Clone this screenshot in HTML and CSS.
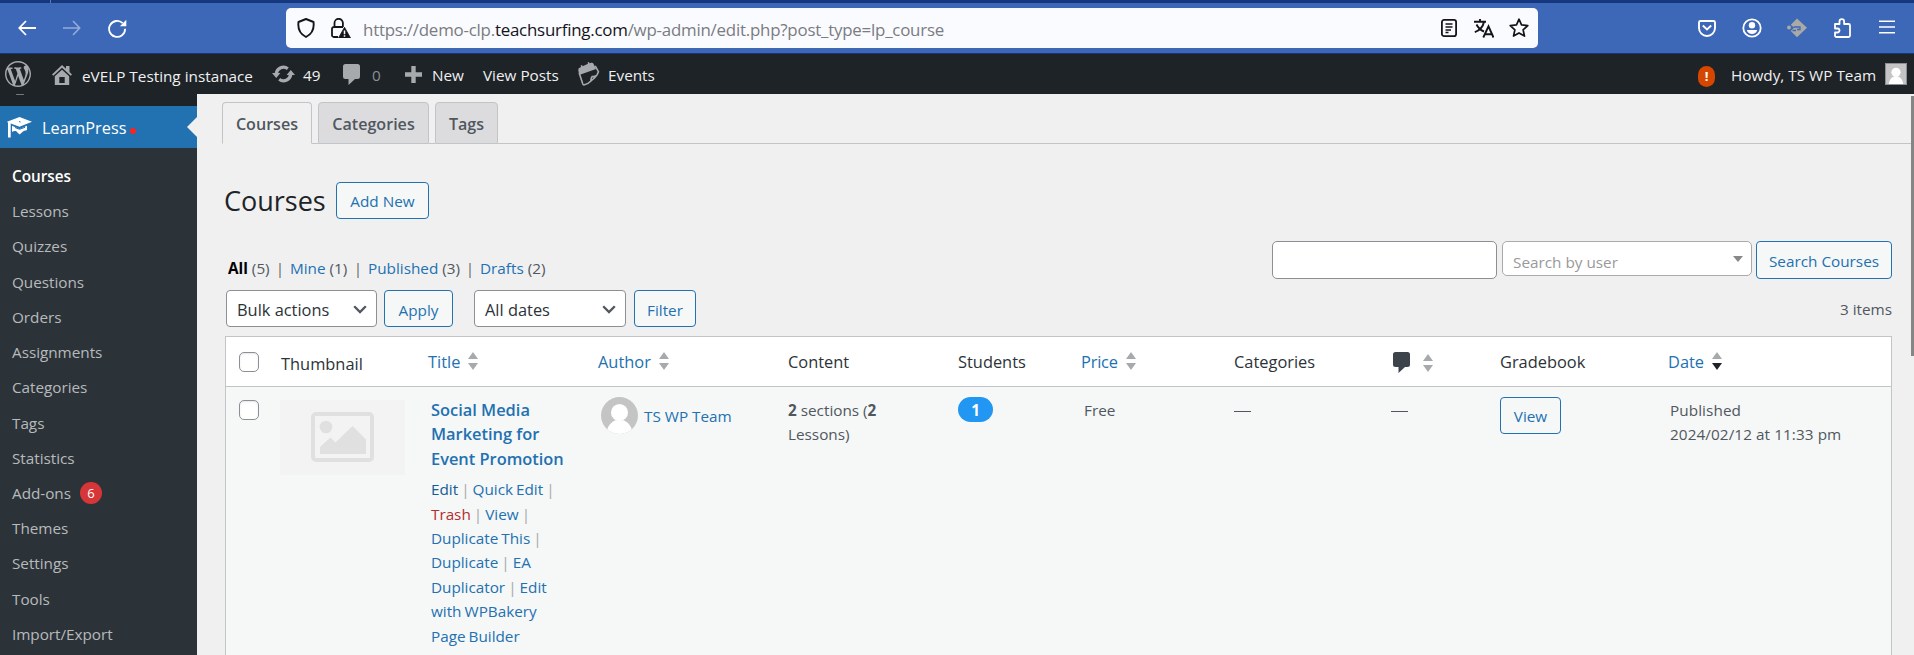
FILE: index.html
```html
<!DOCTYPE html>
<html lang="en">
<head>
<meta charset="utf-8">
<title>Courses</title>
<link rel="stylesheet" href="styles.css">
</head>
<body>
<svg class="defs" width="0" height="0">
  <symbol id="comment" viewBox="0 0 17 21"><path d="M2.500 0h12A2.500 2.500 0 0 1 17 2.500v10a2.500 2.500 0 0 1-2.500 2.500H12l-6.500 6V15h-3A2.500 2.500 0 0 1 0 12.500v-10A2.500 2.500 0 0 1 2.500 0z"/></symbol>
  <symbol id="chev" viewBox="0 0 14 9"><path d="M1.200 1.200 7 7l5.800-5.800" fill="none" stroke="#50575e" stroke-width="2.300"/></symbol>
  <symbol id="person" viewBox="0 0 36 36"><path fill="#c4c4c4" d="M0 0h36v36H0z"/><circle cx="18" cy="15" r="8.300" fill="#fff"/><path fill="#fff" d="M5 36c1-8 5-12 9-13.500h8c4 1.500 8 5.500 9 13.500z"/></symbol>
</svg>

<div class="strip"><i></i></div>
<header class="browser">
  <div class="nav">
    <svg width="18" height="16" viewBox="0 0 18 16"><path d="M8 1 1.300 8 8 15M1.300 8H18" stroke-width="1.800"/></svg>
    <svg class="dim" width="18" height="16" viewBox="0 0 18 16"><path d="M10 1l6.700 7L10 15M16.700 8H0" stroke-width="1.600"/></svg>
    <svg width="19" height="19" viewBox="0 0 19 19"><path d="M17.100 9.800A8 8 0 1 1 14.700 4.200" stroke-width="1.800"/><path d="M18.300.8v6.400h-6.400z" fill="#fff" stroke="none"/></svg>
  </div>
  <div class="url">
    <svg class="i-shield" width="18" height="20" viewBox="0 0 18 20"><path d="M9 1 1.500 4C.7 10 3 16 9 19c6-3 8.300-9 7.500-15z" stroke-width="1.900" stroke-linejoin="round"/></svg>
    <svg class="i-lock" width="20" height="20" viewBox="0 0 20 20"><path d="M3.500 9V5a4.200 4.200 0 0 1 8.400 0v4M7 19H2.800A1.800 1.800 0 0 1 1 17.200v-6.400A1.800 1.800 0 0 1 2.800 9H12" stroke-width="1.800"/><path d="M13.500 9.300 19.500 20h-12z" fill="#15141a" stroke="#15141a" stroke-width=".8" stroke-linejoin="round"/><path d="M13.500 12.500v3.800M13.500 17.300v1.400" stroke="#fff" stroke-width="1.500"/></svg>
    <p class="addr">https://demo-clp.<b>teachsurfing.com</b>/wp-admin/edit.php?post_type=lp_course</p>
    <svg width="16" height="18" viewBox="0 0 16 18"><rect x=".9" y=".9" width="14.200" height="16.200" rx="2.200" stroke-width="1.800"/><path d="M4.500 5h7M4.500 8h7M4.500 11h5.500M4.500 13.500h3" stroke-width="1.300"/></svg>
    <svg class="i-tr" width="20" height="19" viewBox="0 0 20 19"><path d="M0 2.800h12M6 0v2.800M2.500 5.500c2 4 5 6 7.500 7M10 2.800C9 8 5.500 11.500.8 13.200M9.300 18.500 14.500 7.300l5 11.200M11 15.300h7" stroke-width="1.900"/></svg>
    <svg class="i-star" width="20" height="20" viewBox="0 0 20 20"><path d="m10 1.200 2.500 5.700 6.300.7-4.700 4.200 1.400 6.300L10 14.900l-5.500 3.200 1.400-6.300L1.200 7.600l6.300-.7z" stroke-width="1.700" stroke-linejoin="round"/></svg>
  </div>
  <div class="tools">
    <svg width="18" height="17" viewBox="0 0 18 17"><path d="M2.500 1h13A1.500 1.500 0 0 1 17 2.500V8A8 8 0 0 1 1 8V2.500A1.500 1.500 0 0 1 2.500 1zM4.800 5.500 9 9.500l4.200-4" stroke-width="1.900"/></svg>
    <svg width="20" height="20" viewBox="0 0 20 20"><circle cx="10" cy="10" r="8.700" stroke-width="1.800"/><circle cx="10" cy="7.300" r="3.200" fill="#fff" stroke="none"/><path d="M4.800 12h10.400c-.6 2.600-2.700 4-5.200 4s-4.600-1.400-5.200-4z" fill="#fff" stroke="none"/></svg>
    <svg width="20" height="20" viewBox="0 0 20 20"><path d="M10 .5 20 9.800 10 19.200 3.800 13 7 9.800 3.800 6.700z" fill="#a9a9a5" stroke="none"/><path d="M5.500 12.500H9M6.500 9h6.500v2.500h-3" stroke="#3d67b7" stroke-width="1.300"/><circle cx="2" cy="9.400" r="2" fill="#a9a9a5" stroke="none"/></svg>
    <svg width="18" height="20" viewBox="0 0 18 20"><path d="M2 6h4.500V3.500a2.300 2.300 0 0 1 4.600 0V6h4.400A1.500 1.500 0 0 1 17 7.500v10a1.500 1.500 0 0 1-1.500 1.500h-12A1.500 1.500 0 0 1 2 17.500v-3h2.500a1.900 1.900 0 0 0 0-4H2z" stroke-width="1.800" stroke-linejoin="round"/></svg>
    <svg width="16" height="14" viewBox="0 0 16 14"><path d="M0 1.200h16M0 7h16M0 12.800h16" stroke-width="1.500"/></svg>
  </div>
</header>

<div class="adminbar">
  <div class="ab wp"><svg width="26" height="26" viewBox="0 0 20 20"><path fill="#a7aaad" d="M20 10c0-5.510-4.490-10-10-10C4.480 0 0 4.490 0 10c0 5.520 4.480 10 10 10 5.510 0 10-4.480 10-10zM7.780 15.370L4.370 6.220c.55-.02 1.170-.08 1.170-.08.500-.06.440-1.130-.06-1.110 0 0-1.450.110-2.370.110-.18 0-.37 0-.58-.01C4.120 2.690 6.870 1.110 10 1.110c2.330 0 4.450.87 6.050 2.340-.68-.11-1.650.390-1.650 1.580 0 .74.450 1.360.900 2.100.350.610.550 1.360.550 2.460 0 1.490-1.400 5-1.400 5l-3.030-8.370c.540-.02.820-.17.820-.17.500-.05.440-1.250-.06-1.220 0 0-1.440.120-2.380.120-.87 0-2.330-.12-2.330-.12-.5-.03-.56 1.200-.06 1.220l.92.080 1.260 3.410zM17.410 10c.240-.64.740-1.870.430-4.250.700 1.290 1.050 2.710 1.050 4.250 0 3.290-1.730 6.240-4.400 7.780.970-2.590 1.940-5.200 2.920-7.780zM6.100 18.090C3.120 16.650 1.110 13.530 1.110 10c0-1.300.230-2.480.720-3.590C3.250 10.300 4.670 14.200 6.100 18.090zm4.030-6.630l2.580 6.980c-.86.290-1.760.450-2.710.450-.79 0-1.570-.11-2.290-.33.810-2.380 1.620-4.740 2.420-7.100z"/></svg></div>
  <div class="ab home"><svg width="20" height="20" viewBox="0 0 20 20"><path fill="#a7aaad" d="M10 0 0 9.500l1.300 1.300L10 2.800l8.700 8L20 9.500l-2.500-2.400V1H14v2.800zM2.800 11.300 10 4.700l7.200 6.600V20H2.800zM7.300 12v6h5.400v-6z" fill-rule="evenodd"/></svg><span>eVELP Testing instanace</span></div>
  <div class="ab upd"><svg width="23" height="18" viewBox="0 0 23 18"><path fill="none" stroke="#a7aaad" stroke-width="3.300" d="M4.300 8.500a7.200 7.200 0 0 1 11.500-4.800M18.700 9.500a7.200 7.200 0 0 1-11.500 4.800"/><path fill="#a7aaad" d="M0 8h8.400L4.200 13zM14.600 10H23l-4.200-5z"/></svg><span>49</span></div>
  <div class="ab com"><svg width="17" height="21"><use href="#comment"/></svg><span>0</span></div>
  <div class="ab new"><svg width="17" height="17" viewBox="0 0 17 17"><path fill="#a7aaad" d="M6.300 0h4.400v6.300H17v4.400h-6.300V17H6.300v-6.300H0V6.300h6.300z"/></svg><span>New</span></div>
  <div class="ab vp"><span>View Posts</span></div>
  <div class="ab ev"><svg width="22" height="24" viewBox="0 0 22 24"><path fill="#a7aaad" d="M.3 8.300Q0 6.500 1.500 5.700l1.600-.8-.5-1.400 1.500-.6.600 1.300 5.300-2.400L9.500.6 11 0l.5 1.300 1.700-.5q1.600-.4 2.300 1L18 7 1.200 13z"/><path fill="none" stroke="#a7aaad" stroke-width="1.600" d="m1.200 11 3.600 11q.5 1.200 1.700.8 4-1.200 6.500-3.800 1.500-1.600 3.500-3.200 3-2.500 4-6l-3.300-6M13 19q-.3-3 1.200-4.500 2 .5 4.500-1"/></svg><span>Events</span></div>
  <div class="alert">!</div>
  <div class="howdy">Howdy, TS WP Team</div>
  <svg class="me" width="22" height="22"><use href="#person"/></svg>
</div>

<div class="page">
  <nav class="side">
    <div class="sidetop"><i></i></div>
    <div class="current">
      <svg width="25" height="21" viewBox="0 0 25 21"><g fill="#fff"><path d="M12.500 0 25 4.700 12.500 9.800 3.700 6.500V20.500H1V5.700L0 4.700z"/><path d="M5 8.700 12.500 12 20 8.700V13q-1 .8-3 .7L12.500 17.500 9 14q-2.500-.3-4 1z"/></g><path d="m8 10.500 4.500 1.800 5.500-2" stroke="#2271b1" fill="none"/><path d="m12 4.500 1.500.5" stroke="#2271b1"/></svg>
      <span>LearnPress</span><i class="dot"></i><i class="notch"></i>
    </div>
    <ul class="menu">
      <li class="on">Courses</li><li>Lessons</li><li>Quizzes</li><li>Questions</li><li>Orders</li><li>Assignments</li><li>Categories</li><li>Tags</li><li>Statistics</li><li>Add-ons <em>6</em></li><li>Themes</li><li>Settings</li><li>Tools</li><li>Import/Export</li>
    </ul>
  </nav>

  <main class="main">
    <div class="tabs"><a class="tab t1 active">Courses</a><a class="tab t2">Categories</a><a class="tab t3">Tags</a></div>
    <div class="head"><h1>Courses</h1><a class="btn addnew">Add New</a></div>
    <div class="search">
      <div class="input"></div>
      <div class="userpick"><span>Search by user</span><i></i></div>
      <a class="btn sc">Search Courses</a>
    </div>
    <div class="subsub"><span class="s1"><b>All</b> (5)</span><i>|</i><span class="s2"><a>Mine</a> (1)</span><i>|</i><span class="s3"><a>Published</a> (3)</span><i>|</i><span class="s4"><a>Drafts</a> (2)</span></div>
    <div class="actions">
      <div class="select bulk"><span>Bulk actions</span><svg width="14" height="9"><use href="#chev"/></svg></div>
      <a class="btn apply">Apply</a>
      <div class="select dates"><span>All dates</span><svg width="14" height="9"><use href="#chev"/></svg></div>
      <a class="btn filter">Filter</a>
      <span class="count">3 items</span>
    </div>

    <div class="table">
      <div class="row thead">
        <div class="c"><i class="cb"></i></div>
        <div class="c low">Thumbnail</div>
        <div class="c link">Title<i class="sort"></i></div>
        <div class="c link">Author<i class="sort"></i></div>
        <div class="c">Content</div>
        <div class="c">Students</div>
        <div class="c link price">Price<i class="sort"></i></div>
        <div class="c">Categories</div>
        <div class="c cc"><svg width="17" height="21"><use href="#comment"/></svg><i class="sort"></i></div>
        <div class="c">Gradebook</div>
        <div class="c link">Date<i class="sort desc"></i></div>
      </div>
      <div class="row tbody">
        <div><i class="cb"></i></div>
        <div class="thumb"><svg width="63" height="50" viewBox="0 0 63 50"><rect x="2" y="2" width="59" height="46" rx="3" fill="none" stroke="#e0e0e0" stroke-width="4"/><circle cx="15" cy="15" r="6.300" fill="#e0e0e0"/><path fill="#e0e0e0" d="M9 42v-7l10.500-9.500 5 5L41.500 14 55 27.500V42z"/></svg></div>
        <div class="title">
          <p class="name">Social Media<br>Marketing for<br>Event Promotion</p>
          <p class="acts"><a class="dk">Edit</a> | <a>Quick Edit</a> |<br><a class="red">Trash</a> | <a>View</a> |<br><a>Duplicate This</a> |<br><a>Duplicate</a> | <a>EA<br>Duplicator</a> | <a>Edit<br>with WPBakery<br>Page Builder</a></p>
        </div>
        <div class="author"><svg width="37" height="37"><use href="#person"/></svg><a>TS WP Team</a></div>
        <div class="txt"><b>2</b> sections (<b>2</b><br>Lessons)</div>
        <div class="stud"><span>1</span></div>
        <div class="txt in">Free</div>
        <div class="txt"><i class="dash"></i></div>
        <div class="txt"><i class="dash"></i></div>
        <div class="gb"><a class="btn view">View</a></div>
        <div class="txt in date">Published<br>2024/02/12 at 11:33 pm</div>
      </div>
    </div>
    <div class="scroll"></div>
  </main>
</div>
</body>
</html>
```

FILE: styles.css
```css
* { box-sizing: border-box; }
body { margin: 0; width: 1914px; height: 655px; overflow: hidden; display: flex; flex-direction: column; font-family: "Open Sans", sans-serif; font-size: 15.300px; line-height: 24.400px; color: #50575e; background: #f0f0f1; }
p, h1, ul { margin: 0; padding: 0; }
svg { display: block; flex: none; }
i, em { font-style: normal; }
a { color: #2271b1; }
.defs { position: absolute; }

/* Browser chrome */
.strip { height: 3px; background: #14377d; flex: none; padding-left: 50px; }
.strip i { display: block; width: 1px; height: 3px; background: #6079ab; }
.browser { height: 51px; flex: none; display: flex; background: #3d67b7; border-bottom: 1px solid #15377c; }
.browser svg { fill: none; stroke: #fff; }
.nav { width: 286px; padding: 0 0 0 18px; display: flex; gap: 27px; align-items: center; }
.nav .dim { opacity: .45; }
.nav svg:last-child { margin-top: 1px; }
.url { width: 1252px; height: 40px; margin-top: 5px; padding: 0 9px 0 11px; display: flex; align-items: center; background: #fafbff; border-radius: 5px; }
.url svg { stroke: #15141a; }
.i-lock { margin-left: 16px; }
.addr { flex: 1; margin-left: 12px; padding-top: 4px; font-size: 16.900px; letter-spacing: -.23px; color: #7b7b81; white-space: nowrap; }
.addr b { font-weight: 400; color: #15141a; }
.i-tr { margin-left: 17px; }
.i-star { margin-left: 15px; }
.tools { flex: 1; padding-left: 160px; display: flex; align-items: center; gap: 26px; }
.tools svg:nth-child(3) { margin-left: -1px; }
.tools svg:nth-child(5) { margin-left: 2px; margin-top: -2px; }

/* Admin bar */
.adminbar { height: 40px; flex: none; display: flex; align-items: center; padding-left: 5px; background: #1d2327; color: #f0f0f1; white-space: nowrap; }
.ab { display: flex; align-items: center; gap: 10px; }
.ab span, .howdy { padding-top: 3px; }
.wp { width: 47px; }
.home { width: 220px; padding-top: 1px; }
.upd { width: 71px; gap: 8px; }
.com { width: 62px; gap: 12px; fill: #a7aaad; color: #8c8f94; }
.new { width: 78px; gap: 10px; }
.vp { width: 95px; }
.ev { width: 1120px; gap: 8px; }
.alert { width: 17px; height: 21px; margin-top: 5px; border-radius: 9px; background: #d54700; color: #fff; font-size: 13px; line-height: 20px; font-weight: 700; text-align: center; }
.howdy { margin-left: 16px; width: 154px; }
.me { border: 1px solid #8c8f94; }

/* Sidebar */
.page { flex: 1; min-height: 0; display: flex; overflow: hidden; }
.side { width: 197px; flex: none; background: #2c3338; }
.sidetop { height: 12px; background: #1d2327; padding-left: 16px; }
.sidetop i { display: block; width: 8px; height: 1px; background: #777b7f; border-radius: 2px; }
.current { height: 42px; display: flex; align-items: center; padding-left: 7px; background: #2271b1; color: #fff; font-size: 16.300px; position: relative; }
.current span { margin: 2px 0 0 10px; width: 88px; }
.dot { width: 6px; height: 6px; border-radius: 50%; background: #f22; margin-top: 7px; }
.notch { position: absolute; right: 0; top: 11px; border: solid transparent; border-width: 10px 10px 10px 0; border-right-color: #f0f0f1; }
.menu { list-style: none; padding: 11px 0 0 12px; }
.menu li { height: 35.230px; line-height: 35.230px; color: #b7babd; display: flex; align-items: center; gap: 9px; letter-spacing: -.03px; }
.menu .on { color: #fff; font-weight: 600; }
.menu em { width: 22px; height: 22px; border-radius: 50%; background: #d63638; color: #fff; font-size: 13px; line-height: 22px; text-align: center; margin-top: -2px; }

/* Content */
.main { flex: 1; min-width: 0; min-height: 0; overflow: hidden; position: relative; padding-left: 25px; background: #f0f0f1; display: flex; flex-direction: column; }
.main > * { flex: none; }
.tabs { height: 50px; padding-top: 8px; display: flex; gap: 6px; }
.tabs::after { content: ""; flex: 1; margin-left: -6px; border-bottom: 1px solid #c3c4c7; }
.tab { height: 42px; border: 1px solid #c3c4c7; border-radius: 4px 4px 0 0; background: #dcdcde; color: #50575e; font-weight: 600; font-size: 16.100px; line-height: 43px; text-align: center; position: relative; }
.tab + .tab::before { content: ""; position: absolute; bottom: -1px; left: -7px; width: 6px; height: 1px; background: #c3c4c7; }
.t1 { width: 90px; } .t2 { width: 111px; } .t3 { width: 63px; }
.active { background: #f0f0f1; border-bottom-color: #f0f0f1; }
.head { height: 97px; padding: 38px 0 0 2px; display: flex; gap: 12px; }
h1 { width: 100px; font-weight: 400; font-size: 27px; line-height: 38px; color: #1d2327; }
.btn { display: block; height: 37px; border: 1px solid #2271b1; border-radius: 4px; background: #f6f7f7; line-height: 37px; text-align: center; white-space: nowrap; }
.addnew { width: 93px; }
.search { height: 14px; padding-left: 1050px; display: flex; }
.input { width: 225px; height: 38px; border: 1px solid #8c8f94; border-radius: 5px; background: #fff; flex: none; }
.userpick { width: 250px; height: 35px; margin-left: 5px; padding: 0 8px 0 10px; border: 1px solid #aaa; border-radius: 5px; background: #fff; color: #999; display: flex; justify-content: space-between; flex: none; line-height: 40px; }
.userpick i { border: 5px solid transparent; border-top: 6px solid #888; border-bottom: 0; margin-top: 14px; height: 0; }
.sc { width: 136px; height: 38px; line-height: 39px; margin-left: 4px; flex: none; }
.subsub { height: 35px; padding: 1px 0 0 6px; display: flex; color: #50575e; white-space: nowrap; }
.subsub i { width: 20px; text-align: center; color: #646970; }
.subsub b { color: #000; font-weight: 700; }
.s1 { width: 42px; } .s2 { width: 58px; } .s3 { width: 92px; }
.actions { height: 46px; padding: 0 22px 0 4px; display: flex; }
.select { height: 37px; border: 1px solid #8c8f94; border-radius: 4px; background: #fff; color: #2c3338; font-size: 16.400px; line-height: 37px; padding: 0 9px 0 10px; display: flex; justify-content: space-between; }
.select svg { margin-top: 14px; }
.bulk { width: 151px; }
.apply { width: 69px; margin: 0 21px 0 7px; }
.dates { width: 152px; margin-right: 8px; }
.filter { width: 62px; }
.actions .btn { line-height: 39px; }
.count { margin: 7px 0 0 auto; }

/* Courses table */
.main > .table { width: 1667px; margin-left: 3px; border: 1px solid #c3c4c7; border-bottom: 0; flex: 1; min-height: 0; background: #f6f7f7; }
.row { display: grid; grid-template-columns: 41px 148px 170px 190px 170px 124px 152px 157px 109px 168px 1fr; padding-left: 13px; }
.thead { height: 50px; background: #fff; border-bottom: 1px solid #c3c4c7; font-size: 16.400px; color: #2c3338; }
.c { display: flex; align-items: center; padding-top: 2px; height: 49px; }
.c.low { padding: 6px 0 0 1px; }
.price { margin-left: -1px; letter-spacing: -.2px; }
.link { color: #2271b1; }
.cb { display: block; width: 20px; height: 20px; border: 1px solid #8c8f94; border-radius: 5px; background: #fff; box-shadow: inset 0 1px 2px rgba(0,0,0,.1); }
.thead .cb { margin-bottom: 1px; }
.sort { width: 10px; height: 18px; margin: -4px 0 0 8px; display: flex; flex-direction: column; justify-content: space-between; }
.sort::before, .sort::after { content: ""; border: 5px solid transparent; }
.sort::before { border-bottom: 7px solid #a7aaad; border-top: 0; }
.sort::after { border-top: 7px solid #a7aaad; border-bottom: 0; }
.desc::after { border-top-color: #1d2327; }
.cc { fill: #3c434a; padding-left: 2px; }
.cc svg { margin-top: -1px; }
.cc .sort { margin: 1px 0 0 13px; }
.tbody { padding-top: 10px; }
.tbody > div:first-child { padding-top: 3px; }
.thumb { width: 125px; height: 75px; margin-top: 3px; background: #f3f3f3; padding: 12px 0 0 31px; }
.title { padding: 1px 0 0 3px; white-space: nowrap; }
.name { color: #2271b1; font-size: 16.400px; font-weight: 600; padding-bottom: 6px; }
.acts { color: #a7aaad; word-spacing: -.9px; letter-spacing: -.02px; }
.acts .dk { color: #135e96; }
.acts .red { color: #b32d2e; }
.author { display: flex; padding-left: 3px; gap: 6px; line-height: 39px; }
.author svg { border-radius: 50%; }
.txt { padding-top: 1px; white-space: nowrap; }
.in { padding-left: 2px; }
.date { letter-spacing: .08px; }
.stud span { display: block; width: 35px; height: 25px; border-radius: 12.500px; background: #2196f3; color: #fff; font-weight: 700; line-height: 26px; text-align: center; }
.dash { display: block; width: 17px; height: 1px; background: #50575e; margin-top: 13px; }
.view { width: 61px; }
.scroll { position: absolute; right: 0; top: 2px; width: 3px; height: 260px; background: #858585; }
```
